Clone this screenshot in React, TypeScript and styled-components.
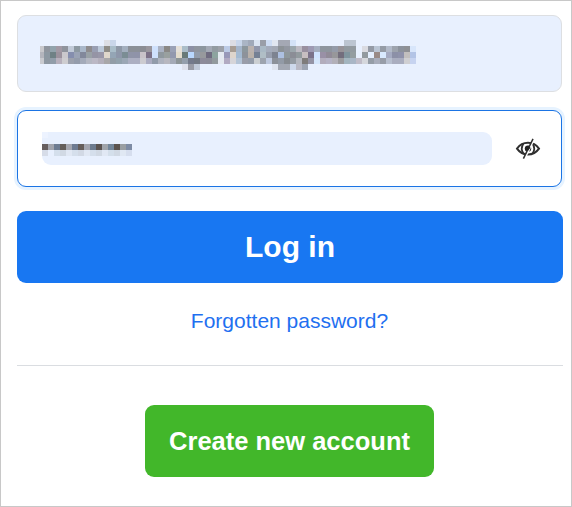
import React from 'react';
import styled, { createGlobalStyle, css } from 'styled-components';

const GlobalStyle = createGlobalStyle`
  * { box-sizing: border-box; }
  body { margin: 0; background: #fff; font-family: "Liberation Sans", Arial, sans-serif; }
`;

const Card = styled.main`
  width: 572px;
  height: 507px;
  border: 1px solid #c8c8c8;
  background: #fff;
  padding: 14px 8px 0 16px;
  display: flex;
  flex-direction: column;
`;

const Field = styled.div<{ $focused?: boolean }>`
  width: 545px;
  height: 77px;
  flex: none;
  border-radius: 9px;
  border: 1px solid #dddfe2;
  background: #e8f0fe;
  display: flex;
  align-items: center;
  padding: 0 20px 0 22px;
  ${(p) =>
    p.$focused &&
    css`
      margin-top: 18px;
      padding-left: 24px;
      background: #fff;
      border-color: #1b74e4;
      box-shadow: 0 0 0 3px #e7f3ff;
    `}
`;

const PasswordInput = styled.div`
  width: 450px;
  height: 33px;
  flex: none;
  border-radius: 0 9px 9px 9px;
  background: #e8f0fe;
`;

const Mosaic = styled.svg`
  display: block;
  flex: none;
`;

const EyeIcon = styled.svg`
  flex: none;
  margin-left: 23px;
`;

const LoginButton = styled.button`
  width: 546px;
  height: 72px;
  flex: none;
  margin-top: 24px;
  padding: 0;
  border: 0;
  border-radius: 9px;
  background: #1877f2;
  color: #fff;
  font: bold 30px/72px "Liberation Sans", Arial, sans-serif;
`;

const ForgotLink = styled.a`
  width: 546px;
  margin-top: 26px;
  text-align: center;
  text-indent: -1px;
  color: #1f70f0;
  font-size: 21px;
  line-height: 24px;
`;

const Divider = styled.hr`
  width: 546px;
  height: 1px;
  margin: 32px 0 39px;
  border: 0;
  background: #dadde1;
  flex: none;
`;

const CreateButton = styled.button`
  width: 289px;
  height: 72px;
  flex: none;
  margin-left: 128px;
  padding: 0;
  border: 0;
  border-radius: 9px;
  background: #42b72a;
  color: #fff;
  font: bold 25.5px/72px "Liberation Sans", Arial, sans-serif;
`;

// Each row lists the tile colours from left to right; "-" leaves a tile empty.
const EMAIL_ROWS = [
  '- - - - - - - - - - - dddfe5 c9d6ea - - - - - - - - - - - - - - - - - - - dcdde3 c8d6ea aab5c5 a0a9b9 dae3f1 999ea8 cddcf3 e0e6f0 a4a8b4 a4a8b4 d4e2f7 - - - - - - - - bcc5d1 bcc5d1 - - - - - - - - - -',
  'c8c8cc 8f959e 92a3ac a299a4 8f949d c1cad8 8d99a2 a9b7c9 8f8c8e 999fb3 bcc9d9 8f8d87 a9bdc9 8e98a7 a3afbf 8b9098 8b9098 8b8d94 99969d cfe1fd aab2c3 8a8886 9aa1b6 e5e0d9 aabdc9 8c90a5 8f959f 8c969f a3a9b5 929ba2 9da1a9 bccbe6 a79d93 a4b5ca 8c979d bab2af 9197ab a9b9c5 a4acbc a3a9b5 8c9297 9297a1 9ca7ad bdbac3 9990a0 9e9ab3 a6afc0 8e959e 8e959e 949ba9 979398 929aa0 929aa0 - dadbe1 949aa5 bac5d4 959ca6 b2bac9 9da3ad 8c929c 8e9095 d8e6fb',
  'b4b5bd 8d98a2 6f8185 9b929d cac8cc 858eae 9aa3b5 82889b 99a1a6 9594a5 9997a9 dfd7cb 94a5b5 8e97aa 7b8d94 8f94a8 8f93a9 c8c2c8 7c7187 cfe1fd 8f989f 99a09f 9298ae e3dccd 687a78 b9d8ff 929cab 97999d 6f6b80 8da49f e4e9f0 9898b8 ded5cc a3bad2 8d929a b9b1aa 748094 b0bec6 979ead 7d8390 adc0e1 8e979b 8b8d96 929a9e c7bec1 7b728a d1e4ff 9990a6 918b98 97979a 736e7d 80959e 949da0 - 929a9f e4efff 998a86 d9eaff a5abc2 8c90a7 8f92ab c2bfbe b3c4e6',
  'c9cacf 8e98a2 919da9 b7b0bc cecdd0 9ca1ad 949cab a3aab9 b4b7c2 bbb8c5 b3afbb a8a7a9 929da7 92a2ad 9ba7b5 acafc2 acafc2 cccbd0 abacc1 919baa adb2be b7b7bf a4aab7 8d9598 949fac 737a8b 727984 8d8b9a 8b8b98 929a9e e4e9f0 b1aac2 d6d5d9 b3c4d7 999da9 949ca9 cbcfd2 9da4af bec9df 8c9199 929aa6 868b91 949ba3 b4b7bf 7f7c7b 9493a5 d5e6fb b2adbd b4b2c5 b2b0b8 9a9a9d a3b5bf a9b6c6 c0bcc8 d5d7dc 959da7 a8adbb 979da8 b7bfcf a9adbf a9adbf cfcfd2 c6d3f0',
  '- - - - - - - - - - - - - - - - - - - - - - - - dfe2ed 999ca6 c0cad9 - - - - - - - - - - - - dfe4ef a3a8b3 a3a8b3 ced9ec b9b9c5 9ea5b3 - - - - - - - - - - - - - - - - - -',
];

const PASSWORD_ROWS = [
  'edf3ff - - - - - - - - - - - - - -',
  '- - - - - - - - - - - - - - -',
  '665e5e a2a4ac 6e7c91 635d59 a4a6af 6e7b91 655d5a a3a5af 6d7b8e 5b5350 a0a4aa 738699 5b534e 999ea2 7d8ba4',
  'd6dce8 - d4dfec d1d9e4 e1e8f4 d5dfec d2d9e5 e1e8f4 d5dfec d1d9e4 e1e8f4 d4dfeb d1d9e4 e0e8f3 d6deee',
];

type TilesProps = { rows: string[]; width: number; firstWidth?: number; top?: number; height: number };

function Tiles({ rows, width, firstWidth = 6, top = 0, height }: TilesProps) {
  return (
    <Mosaic width={width} height={height} shapeRendering="crispEdges" aria-hidden="true">
      {rows.flatMap((row, y) =>
        row.split(' ').map((color, x) =>
          color === '-' ? null : (
            <rect
              key={`${x}-${y}`}
              x={x === 0 ? 0 : firstWidth + (x - 1) * 6}
              y={top + y * 6}
              width={x === 0 ? firstWidth : 6}
              height={6}
              fill={`#${color}`}
            />
          ),
        ),
      )}
    </Mosaic>
  );
}

export default function App() {
  return (
    <>
      <GlobalStyle />
      <Card>
        <Field>
          <Tiles rows={EMAIL_ROWS} width={376} firstWidth={4} top={3} height={33} />
        </Field>
        <Field $focused>
          <PasswordInput>
            <Tiles rows={PASSWORD_ROWS} width={90} height={24} />
          </PasswordInput>
          <EyeIcon width="26" height="25" viewBox="0 -0.6 26 25" fill="none" stroke="#303030">
            <path d="M2 12C7.5 4.2 18.5 4.2 24 12C18.5 19.8 7.5 19.8 2 12Z" strokeWidth="2" />
            <path d="M8.4 7.2C6.5 10 6.5 14 8.4 16.8M17.6 7.2C19.5 10 19.5 14 17.6 16.8" strokeWidth="1.8" />
            <circle cx="13" cy="12" r="3.2" fill="#222" stroke="none" />
            <path d="M19.1 2.4L9.7 22" stroke="#fff" strokeWidth="1.8" />
            <path d="M18 2.2L8.4 22" strokeWidth="1.5" />
            <path d="M11.8 13L14.3 10.2" stroke="#222" strokeWidth="3.2" />
          </EyeIcon>
        </Field>
        <LoginButton>Log in</LoginButton>
        <ForgotLink>Forgotten password?</ForgotLink>
        <Divider />
        <CreateButton>Create new account</CreateButton>
      </Card>
    </>
  );
}
